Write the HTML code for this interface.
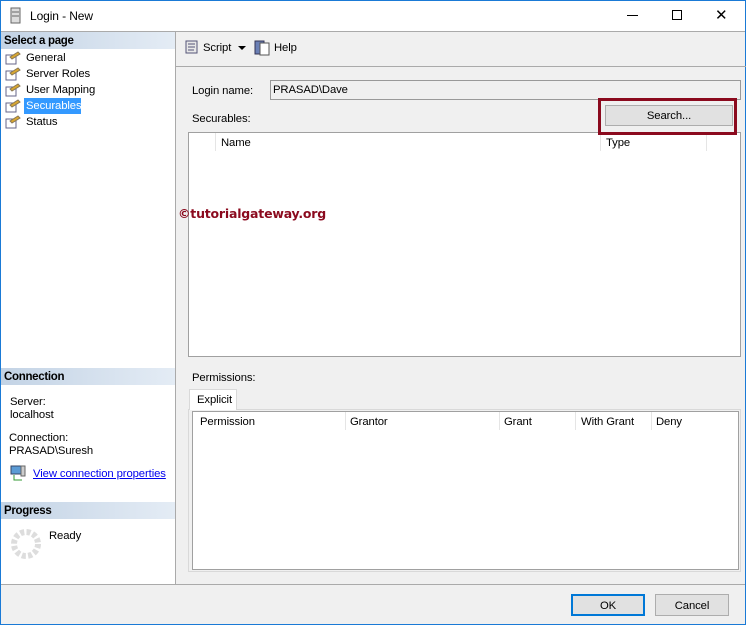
<!DOCTYPE html>
<html><head><meta charset="utf-8"><style>
*{box-sizing:border-box;margin:0;padding:0}
body{width:746px;height:625px;overflow:hidden;font-family:"Liberation Sans",sans-serif;font-size:11.3px;color:#000;background:#f0f0f0;position:relative;letter-spacing:-0.1px}
.a{position:absolute}
.hdr{position:absolute;left:1px;width:174px;height:17px;background:linear-gradient(to right,#c3d3e5,#e4ecf5);font-weight:bold;font-size:11.5px;padding:3px 3px 0;letter-spacing:-0.3px}
.item{position:absolute;left:26px}
.ic{position:absolute;left:5px;width:16px;height:14px}
.col{position:absolute;top:0;height:18px;border-left:1px solid #e5e5e5}
.t{margin-top:1px}
</style></head><body>
<div class="a" style="left:0;top:0;width:746px;height:625px;border:1px solid #1a7ad6"></div>
<div class="a" style="left:1px;top:1px;width:744px;height:30px;background:#fff"></div>
<svg class="a" style="left:10px;top:7px" width="12" height="18"><rect x="1" y="1" width="9" height="15" fill="#ddd" stroke="#666"/><line x1="2" y1="5" x2="9" y2="5" stroke="#666"/><line x1="2" y1="9" x2="9" y2="9" stroke="#666"/></svg>
<div class="a" style="left:30px;top:9px;font-size:12px">Login - New</div>
<div class="a" style="left:627px;top:15px;width:11px;height:1px;background:#000"></div>
<div class="a" style="left:672px;top:10px;width:10px;height:10px;border:1px solid #000"></div>
<div class="a" style="left:715px;top:6px;font-size:15px">✕</div>
<div class="a" style="left:1px;top:31px;width:744px;height:1px;background:#aaa"></div>
<div class="a" style="left:1px;top:32px;width:174px;height:552px;background:#fff"></div>
<div class="a" style="left:175px;top:32px;width:1px;height:552px;background:#aaa"></div>
<div class="hdr" style="top:32px">Select a page</div>
<svg class="ic" style="top:51px"><rect x="1" y="4" width="10" height="9" fill="#fff" stroke="#668"/><path d="M5 6l8-5 2 2-8 5z" fill="#d9a730" stroke="#875"/></svg>
<div class="item" style="top:52px">General</div>
<svg class="ic" style="top:67px"><rect x="1" y="4" width="10" height="9" fill="#fff" stroke="#668"/><path d="M5 6l8-5 2 2-8 5z" fill="#d9a730" stroke="#875"/></svg>
<div class="item" style="top:68px">Server Roles</div>
<svg class="ic" style="top:83px"><rect x="1" y="4" width="10" height="9" fill="#fff" stroke="#668"/><path d="M5 6l8-5 2 2-8 5z" fill="#d9a730" stroke="#875"/></svg>
<div class="item" style="top:84px">User Mapping</div>
<svg class="ic" style="top:99px"><rect x="1" y="4" width="10" height="9" fill="#fff" stroke="#668"/><path d="M5 6l8-5 2 2-8 5z" fill="#d9a730" stroke="#875"/></svg>
<div class="a" style="left:24px;top:98px;width:57px;height:16px;background:#3399ff"></div>
<div class="item" style="top:100px;color:#fff">Securables</div>
<svg class="ic" style="top:115px"><rect x="1" y="4" width="10" height="9" fill="#fff" stroke="#668"/><path d="M5 6l8-5 2 2-8 5z" fill="#d9a730" stroke="#875"/></svg>
<div class="item" style="top:116px">Status</div>
<div class="hdr" style="top:368px">Connection</div>
<div class="a" style="left:10px;top:396px;line-height:13px">Server:<br>localhost</div>
<div class="a" style="left:9px;top:432px;line-height:13px">Connection:<br>PRASAD\Suresh</div>
<svg class="a" style="left:10px;top:465px" width="16" height="16"><rect x="1" y="1" width="10" height="8" fill="#5b9bd5" stroke="#346"/><rect x="11" y="1" width="4" height="10" fill="#ccc" stroke="#666"/><path d="M4 10v5h8" stroke="#393" fill="none"/></svg>
<div class="a" style="left:33px;top:468px;color:#0000ee;text-decoration:underline">View connection properties</div>
<div class="hdr" style="top:502px">Progress</div>
<svg class="a" style="left:10px;top:528px" width="32" height="32"><circle cx="16" cy="16" r="12" fill="none" stroke="#ddd" stroke-width="6" stroke-dasharray="4 2.3"/></svg>
<div class="a" style="left:49px;top:530px">Ready</div>
<svg class="a" style="left:183px;top:39px" width="18" height="17"><path d="M3 2h11v12H3z" fill="#e8e8e8" stroke="#557"/><path d="M5 5h7M5 8h7M5 11h6" stroke="#557"/></svg>
<div class="a" style="left:203px;top:42px">Script</div>
<div class="a" style="left:238px;top:46px;border-left:4px solid transparent;border-right:4px solid transparent;border-top:4px solid #000"></div>
<svg class="a" style="left:254px;top:39px" width="17" height="17"><rect x="1" y="2" width="9" height="13" fill="#6a7fb5" stroke="#335"/><rect x="6" y="4" width="9" height="12" fill="#fff" stroke="#555"/></svg>
<div class="a" style="left:274px;top:42px">Help</div>
<div class="a" style="left:176px;top:66px;width:570px;height:1px;background:#aaa"></div>
<div class="a" style="left:192px;top:85px">Login name:</div>
<div class="a" style="left:270px;top:80px;width:471px;height:20px;border:1px solid #999;background:#f0f0f0;padding:3px 2px">PRASAD\Dave</div>
<div class="a" style="left:192px;top:113px">Securables:</div>
<div class="a" style="left:188px;top:132px;width:553px;height:225px;border:1px solid #a0a0a0;background:#fff">
<div class="col" style="left:26px"></div><div class="a" style="left:32px;top:4px">Name</div>
<div class="col" style="left:411px"></div><div class="a" style="left:417px;top:4px">Type</div>
<div class="col" style="left:517px"></div>
</div>
<div class="a" style="left:598px;top:98px;width:139px;height:37px;border:3px solid #8b0a1e"></div>
<div class="a" style="left:605px;top:105px;width:128px;height:21px;border:1px solid #adadad;background:#e1e1e1;text-align:center;padding-top:4px">Search...</div>
<div class="a" style="left:178px;top:206px;color:#8b0a1e;font-weight:bold;font-size:12.5px;letter-spacing:-0.2px;font-family:'DejaVu Sans',sans-serif">©tutorialgateway.org</div>
<div class="a" style="left:192px;top:372px">Permissions:</div>
<div class="a" style="left:188px;top:409px;width:553px;height:163px;border:1px solid #d9d9d9"></div>
<div class="a" style="left:189px;top:389px;width:48px;height:21px;border:1px solid #d9d9d9;border-bottom:none;background:#fff;padding:4px 0 0 7px">Explicit</div>
<div class="a" style="left:192px;top:411px;width:547px;height:159px;border:1px solid #a0a0a0;background:#fff">
<div class="a" style="left:7px;top:4px">Permission</div>
<div class="col" style="left:152px"></div><div class="a" style="left:157px;top:4px">Grantor</div>
<div class="col" style="left:306px"></div><div class="a" style="left:311px;top:4px">Grant</div>
<div class="col" style="left:382px"></div><div class="a" style="left:388px;top:4px">With Grant</div>
<div class="col" style="left:458px"></div><div class="a" style="left:463px;top:4px">Deny</div>
</div>
<div class="a" style="left:1px;top:584px;width:744px;height:1px;background:#aaa"></div>
<div class="a" style="left:571px;top:594px;width:74px;height:22px;border:2px solid #0078d7;background:#e1e1e1;text-align:center;padding-top:4px">OK</div>
<div class="a" style="left:655px;top:594px;width:74px;height:22px;border:1px solid #adadad;background:#e1e1e1;text-align:center;padding-top:5px">Cancel</div>
</body></html>
